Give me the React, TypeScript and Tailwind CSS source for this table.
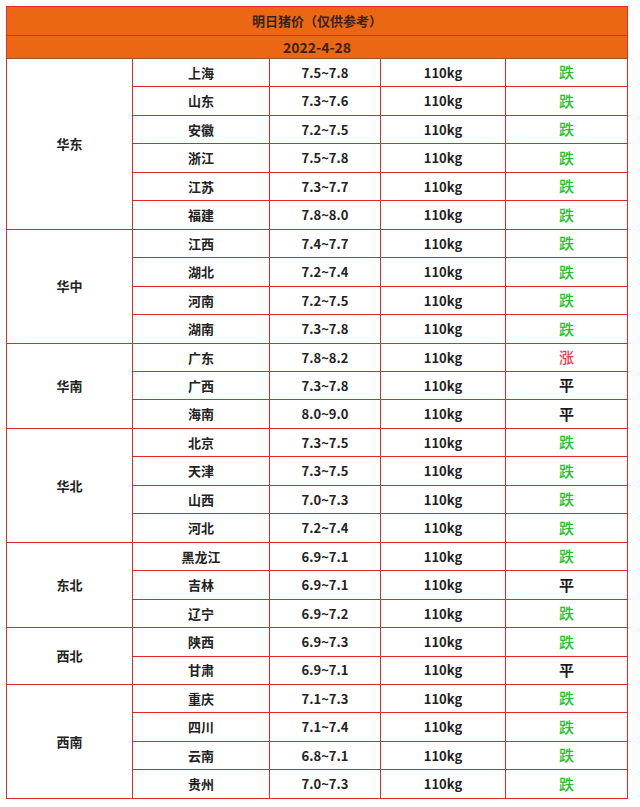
const groups: { region: string; rows: [string, string, string][] }[] = [
  {
    region: "华东",
    rows: [
      ["上海", "7.5~7.8", "跌"],
      ["山东", "7.3~7.6", "跌"],
      ["安徽", "7.2~7.5", "跌"],
      ["浙江", "7.5~7.8", "跌"],
      ["江苏", "7.3~7.7", "跌"],
      ["福建", "7.8~8.0", "跌"],
    ],
  },
  {
    region: "华中",
    rows: [
      ["江西", "7.4~7.7", "跌"],
      ["湖北", "7.2~7.4", "跌"],
      ["河南", "7.2~7.5", "跌"],
      ["湖南", "7.3~7.8", "跌"],
    ],
  },
  {
    region: "华南",
    rows: [
      ["广东", "7.8~8.2", "涨"],
      ["广西", "7.3~7.8", "平"],
      ["海南", "8.0~9.0", "平"],
    ],
  },
  {
    region: "华北",
    rows: [
      ["北京", "7.3~7.5", "跌"],
      ["天津", "7.3~7.5", "跌"],
      ["山西", "7.0~7.3", "跌"],
      ["河北", "7.2~7.4", "跌"],
    ],
  },
  {
    region: "东北",
    rows: [
      ["黑龙江", "6.9~7.1", "跌"],
      ["吉林", "6.9~7.1", "平"],
      ["辽宁", "6.9~7.2", "跌"],
    ],
  },
  {
    region: "西北",
    rows: [
      ["陕西", "6.9~7.3", "跌"],
      ["甘肃", "6.9~7.1", "平"],
    ],
  },
  {
    region: "西南",
    rows: [
      ["重庆", "7.1~7.3", "跌"],
      ["四川", "7.1~7.4", "跌"],
      ["云南", "6.8~7.1", "跌"],
      ["贵州", "7.0~7.3", "跌"],
    ],
  },
];

function trendColor(t: string) {
  if (t === "跌") return "text-[#1fc41f] font-medium";
  if (t === "涨") return "text-[#f2334a] font-medium";
  return "text-[#1a1a1a] font-bold";
}

export default function App() {
  const cell = "border border-[#e3282a] text-center";
  return (
    <div className="bg-white w-[640px] h-[807px] pt-[6px] pl-[6px] font-['Noto_Sans_CJK_SC','Noto_Sans',sans-serif] font-bold text-[13px] text-[#222]">
      <table className="border-collapse w-[621px] table-fixed">
        <colgroup>
          <col className="w-[126px]" />
          <col className="w-[137px]" />
          <col className="w-[111px]" />
          <col className="w-[125px]" />
          <col className="w-[122px]" />
        </colgroup>
        <tbody>
          <tr className="h-[29px] bg-[#ec6714]">
            <td colSpan={5} className="border border-[#e3282a] text-center text-[#3b2313]">
              明日猪价（仅供参考）
            </td>
          </tr>
          <tr className="h-[23px] bg-[#ec6714]">
            <td colSpan={5} className="border border-[#e3282a] border-b-[#a0522d] text-center text-[14px] text-[#3b2313]">
              2022-4-28
            </td>
          </tr>
          {groups.map((g) =>
            g.rows.map((r, i) => (
              <tr key={g.region + r[0]} className="h-[28.46px]">
                {i === 0 && (
                  <td rowSpan={g.rows.length} className={cell}>
                    {g.region}
                  </td>
                )}
                <td className={cell}>{r[0]}</td>
                <td className={cell}>{r[1]}</td>
                <td className={cell}>110kg</td>
                <td className={`${cell} text-[15px] ${trendColor(r[2])}`}>{r[2]}</td>
              </tr>
            ))
          )}
        </tbody>
      </table>
    </div>
  );
}
